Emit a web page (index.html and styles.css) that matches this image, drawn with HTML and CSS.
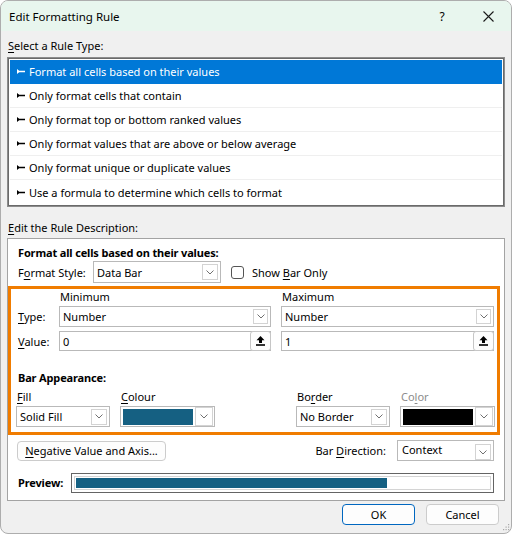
FILE: index.html
```html
<!DOCTYPE html>
<html>
<head>
<meta charset="utf-8">
<title>Edit Formatting Rule</title>
<link rel="stylesheet" href="styles.css">
</head>
<body>
<div class="window">
  <div class="titlebar">
    <span class="title">Edit Formatting Rule</span>
    <span class="tb-btn help">?</span>
    <span class="tb-btn close"><svg width="11" height="11" viewBox="0 0 11 11"><path d="M0.5 0.5 L10.5 10.5 M10.5 0.5 L0.5 10.5" stroke="#1a1a1a" stroke-width="1.1" fill="none"/></svg></span>
  </div>
  <div class="content">
    <div class="label sel-label"><u>S</u>elect a Rule Type:</div>
    <div class="listbox">
      <div class="row selected"><svg class="ptr" viewBox="0 0 8 5"><path d="M0 0 L2.2 1.8 L8 1.8 L8 3.2 L2.2 3.2 L0 5 Z"/></svg>Format all cells based on their values</div>
      <div class="row"><svg class="ptr" viewBox="0 0 8 5"><path d="M0 0 L2.2 1.8 L8 1.8 L8 3.2 L2.2 3.2 L0 5 Z"/></svg>Only format cells that contain</div>
      <div class="row"><svg class="ptr" viewBox="0 0 8 5"><path d="M0 0 L2.2 1.8 L8 1.8 L8 3.2 L2.2 3.2 L0 5 Z"/></svg>Only format top or bottom ranked values</div>
      <div class="row"><svg class="ptr" viewBox="0 0 8 5"><path d="M0 0 L2.2 1.8 L8 1.8 L8 3.2 L2.2 3.2 L0 5 Z"/></svg>Only format values that are above or below average</div>
      <div class="row"><svg class="ptr" viewBox="0 0 8 5"><path d="M0 0 L2.2 1.8 L8 1.8 L8 3.2 L2.2 3.2 L0 5 Z"/></svg>Only format unique or duplicate values</div>
      <div class="row"><svg class="ptr" viewBox="0 0 8 5"><path d="M0 0 L2.2 1.8 L8 1.8 L8 3.2 L2.2 3.2 L0 5 Z"/></svg>Use a formula to determine which cells to format</div>
    </div>
    <div class="label desc-label"><u>E</u>dit the Rule Description:</div>
    <div class="panel">
      <div class="bold">Format all cells based on their values:</div>
      <div class="style-row">
        <span class="style-label">F<u>o</u>rmat Style:</span>
        <div class="dd dd-style"><span class="dd-text">Data Bar</span><span class="dd-btn"><svg width="8" height="5" viewBox="0 0 8 5"><path d="M0.5 0.5 L4 4 L7.5 0.5" fill="none" stroke="#707070"/></svg></span></div>
        <span class="checkbox"></span>
        <span class="check-label">Show <u>B</u>ar Only</span>
      </div>
      <div class="highlight">
        <div class="minmax">
          <div></div>
          <div class="colhead">Minimum</div>
          <div class="colhead">Maximum</div>
          <div class="rowlabel"><u>T</u>ype:</div>
          <div class="dd dd-grid"><span class="dd-text">Number</span><span class="dd-btn"><svg width="8" height="5" viewBox="0 0 8 5"><path d="M0.5 0.5 L4 4 L7.5 0.5" fill="none" stroke="#707070"/></svg></span></div>
          <div class="dd dd-grid"><span class="dd-text">Number</span><span class="dd-btn"><svg width="8" height="5" viewBox="0 0 8 5"><path d="M0.5 0.5 L4 4 L7.5 0.5" fill="none" stroke="#707070"/></svg></span></div>
          <div class="rowlabel"><u>V</u>alue:</div>
          <div class="inp"><span class="dd-text">0</span><span class="up-btn"><svg width="9" height="10" viewBox="0 0 9 10"><path d="M4.5 0 L8.5 4.2 L6 4.2 L6 7 L3 7 L3 4.2 L0.5 4.2 Z"/><rect x="0" y="8.2" width="9" height="1.6"/></svg></span></div>
          <div class="inp"><span class="dd-text">1</span><span class="up-btn"><svg width="9" height="10" viewBox="0 0 9 10"><path d="M4.5 0 L8.5 4.2 L6 4.2 L6 7 L3 7 L3 4.2 L0.5 4.2 Z"/><rect x="0" y="8.2" width="9" height="1.6"/></svg></span></div>
        </div>
        <div class="bold bar-head">Bar Appearance:</div>
        <div class="appear">
          <div class="group">
            <div class="field">
              <div class="flabel"><u>F</u>ill</div>
              <div class="dd dd-small"><span class="dd-text">Solid Fill</span><span class="dd-btn"><svg width="8" height="5" viewBox="0 0 8 5"><path d="M0.5 0.5 L4 4 L7.5 0.5" fill="none" stroke="#707070"/></svg></span></div>
            </div>
            <div class="field">
              <div class="flabel"><u>C</u>olour</div>
              <div class="dd dd-color"><span class="swatch teal"></span><span class="dd-btn cbtn"><svg width="8" height="5" viewBox="0 0 8 5"><path d="M0.5 0.5 L4 4 L7.5 0.5" fill="none" stroke="#707070"/></svg></span></div>
            </div>
          </div>
          <div class="group">
            <div class="field">
              <div class="flabel">Bo<u>r</u>der</div>
              <div class="dd dd-small"><span class="dd-text">No Border</span><span class="dd-btn"><svg width="8" height="5" viewBox="0 0 8 5"><path d="M0.5 0.5 L4 4 L7.5 0.5" fill="none" stroke="#707070"/></svg></span></div>
            </div>
            <div class="field">
              <div class="flabel disabled">Co<u>l</u>or</div>
              <div class="dd dd-color"><span class="swatch black"></span><span class="dd-btn cbtn"><svg width="8" height="5" viewBox="0 0 8 5"><path d="M0.5 0.5 L4 4 L7.5 0.5" fill="none" stroke="#707070"/></svg></span></div>
            </div>
          </div>
        </div>
      </div>
      <div class="neg-row">
        <span class="btn neg-btn"><u>N</u>egative Value and Axis...</span>
        <span class="spacer"></span>
        <span class="dir-label">Bar <u>D</u>irection:</span>
        <div class="dd dd-dir"><span class="dd-text">Context</span><span class="dd-btn"><svg width="8" height="5" viewBox="0 0 8 5"><path d="M0.5 0.5 L4 4 L7.5 0.5" fill="none" stroke="#707070"/></svg></span></div>
      </div>
      <div class="preview-row">
        <span class="bold preview-label">Preview:</span>
        <div class="preview-box"><div class="preview-inner"><div class="preview-bar"></div></div></div>
      </div>
    </div>
    <div class="buttons">
      <span class="btn ok">OK</span>
      <span class="btn cancel">Cancel</span>
    </div>
  </div>
  <svg class="grip" width="9" height="9" viewBox="0 0 9 9"><g fill="#a8a8a8"><rect x="7" y="1" width="1.2" height="1.2"/><rect x="4.5" y="3.5" width="1.2" height="1.2"/><rect x="7" y="3.5" width="1.2" height="1.2"/><rect x="2" y="6" width="1.2" height="1.2"/><rect x="4.5" y="6" width="1.2" height="1.2"/><rect x="7" y="6" width="1.2" height="1.2"/></g></svg>
</div>
</body>
</html>
```

FILE: styles.css
```css
* { box-sizing: border-box; }
html, body { margin: 0; padding: 0; }
body {
  width: 512px;
  height: 534px;
  font-family: "Noto Sans", "Open Sans", sans-serif;
  font-size: 11px;
  color: #000;
  background: #ffffff;
}
u { text-decoration: underline; text-underline-offset: 2px; }

.window {
  position: relative;
  width: 512px;
  height: 534px;
  border: 1px solid #adadad;
  border-radius: 8px;
  background: #f0f0f0;
  overflow: hidden;
  display: flex;
  flex-direction: column;
}
.titlebar {
  height: 30px;
  flex: none;
  background: #e8f6ee;
  display: flex;
  align-items: center;
  padding-left: 8px;
}
.title { flex: 1; font-size: 11.5px; }
.tb-btn {
  width: 46px;
  height: 30px;
  display: flex;
  align-items: center;
  justify-content: center;
  font-size: 12px;
}

.content {
  flex: 1;
  padding: 0 6px;
  display: flex;
  flex-direction: column;
}
.label { line-height: 16px; padding-left: 1px; }
.sel-label { margin-top: 7px; }
.listbox {
  margin-top: 3px;
  height: 150px;
  border: 1px solid #8c8c8c;
  box-shadow: inset 0 0 0 1px #6a6a6a;
  background: #fff;
  padding: 2px;
}
.row {
  height: 24px;
  display: flex;
  align-items: center;
  padding-left: 7px;
  border-bottom: 1px solid #efefef;
}
.row:last-child { border-bottom: none; }
.row.selected { background: #0078d7; color: #fff; border-bottom-color: #0078d7; }
.ptr { width: 8px; height: 5px; margin-right: 4px; fill: currentColor; flex: none; }

.desc-label { margin-top: 13px; }
.panel {
  margin-top: 2px;
  border: 1px solid #a3a3a3;
  background: #fff;
  padding: 6px 10px 7px 10px;
}
.bold { font-weight: bold; line-height: 16px; letter-spacing: -0.15px; }

.style-row { display: flex; align-items: center; height: 22px; }
.style-label { width: 75px; }
.dd {
  background: #fff;
  border: 1px solid #b9b9b9;
  display: flex;
  align-items: center;
  padding-left: 3px;
}
.dd-text { flex: 1; white-space: nowrap; }
.dd-btn {
  width: 16px;
  height: 16px;
  border: 1px solid #d3d3d3;
  margin-right: 2px;
  display: flex;
  align-items: center;
  justify-content: center;
  flex: none;
}
.dd-style { width: 128px; height: 22px; }
.checkbox {
  width: 13px;
  height: 13px;
  border: 1px solid #555;
  border-radius: 3px;
  margin-left: 10px;
  background: #fff;
}
.check-label { margin-left: 8px; }

.highlight {
  margin: 3px 0 0 -10px;
  width: 492px;
  border: 3px solid #f07c00;
  padding-bottom: 5px;
}
.minmax {
  display: grid;
  grid-template-columns: 38px 212px 213px;
  grid-template-rows: 17px 25px 20px;
  column-gap: 10px;
}
.colhead { line-height: 16px; padding-left: 1px; }
.rowlabel { padding-left: 7px; line-height: 21px; }
.dd-grid { height: 21px; }
.dd-grid .dd-btn { width: 15px; height: 15px; }
.inp {
  height: 20px;
  border: 1px solid #b9b9b9;
  background: #fff;
  display: flex;
  align-items: center;
  padding-left: 3px;
}
.up-btn {
  width: 21px;
  align-self: stretch;
  margin: -1px -1px -1px 0;
  border: 1px solid #c6c6c6;
  border-radius: 3px;
  background: #fdfdfd;
  display: flex;
  align-items: center;
  justify-content: center;
}
.bar-head { margin-top: 19px; padding-left: 7px; }
.appear { display: flex; padding-left: 5px; margin-top: 3px; }
.group { display: flex; gap: 10px; }
.group + .group { margin-left: 81px; }
.flabel { line-height: 16px; padding-left: 1px; height: 17px; }
.flabel.disabled { color: #8c8c8c; }
.dd-small { width: 94px; height: 21px; }
.dd-color { width: 95px; height: 21px; padding: 1px; }
.swatch { width: 72px; height: 16px; margin-left: 1px; }
.swatch.teal { background: #156082; }
.swatch.black { background: #000; }
.cbtn { width: 18px; height: 19px; margin-left: 2px; margin-right: 0; }

.neg-row {
  display: flex;
  align-items: center;
  margin-top: 5px;
  margin-left: -1px;
  height: 21px;
}
.btn {
  height: 20px;
  border: 1px solid #cccccc;
  border-radius: 4px;
  background: #fdfdfd;
  display: flex;
  align-items: center;
  justify-content: center;
}
.neg-btn { width: 149px; }
.spacer { flex: 1; }
.dir-label { margin-right: 11px; }
.dd-dir { width: 97px; height: 21px; padding-left: 4px; align-items: flex-start; padding-top: 1px; }
.dd-dir .dd-btn { margin-top: 2px; }

.preview-row { display: flex; align-items: center; margin-top: 12px; height: 20px; }
.preview-label { width: 53px; }
.preview-box {
  flex: 1;
  height: 20px;
  border: 1px solid #646464;
  padding: 2px;
  background: #fff;
}
.preview-inner {
  height: 100%;
  border: 1px solid #d4d4d4;
  padding: 1px;
}
.preview-bar { width: 311px; height: 10px; background: #156082; }

.buttons {
  display: flex;
  justify-content: flex-end;
  gap: 11px;
  margin-top: 3px;
  padding-right: 6px;
}
.buttons .btn { width: 73px; height: 21px; }
.btn.ok { border-color: #0067c0; }

.grip { position: absolute; right: 1px; bottom: 1px; }
```
